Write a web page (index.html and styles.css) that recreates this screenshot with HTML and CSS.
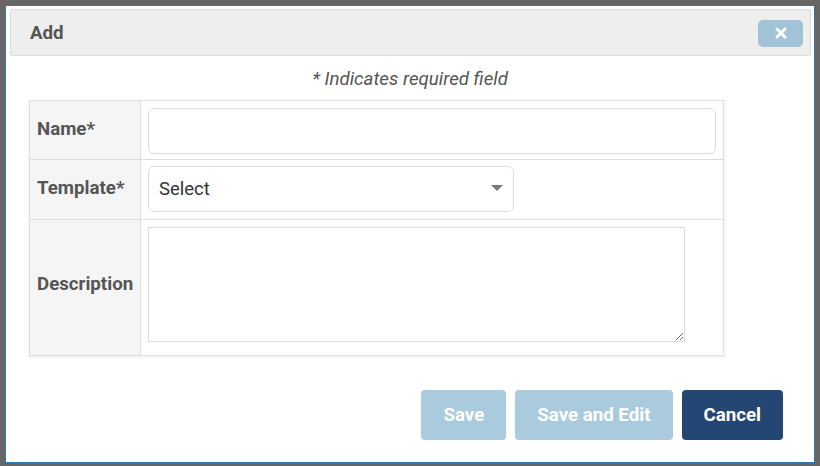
FILE: index.html
```html
<!DOCTYPE html>
<html lang="en">
<head>
    <meta charset="UTF-8">
    <title>Add</title>
    <link rel="stylesheet" href="styles.css">
</head>
<body>
    <div class="modal">
        <div class="modal-header">
            <h4 class="modal-title">Add</h4>
            <button class="close-button" type="button" aria-label="Close">
                <svg width="12" height="12" viewBox="0 0 12 12">
                    <path d="M2 2 L10 10 M10 2 L2 10" stroke="#fff" stroke-width="3" stroke-linecap="round"/>
                </svg>
            </button>
        </div>

        <div class="modal-body">
            <p class="required-note">* Indicates required field</p>

            <table class="form-table">
                <colgroup>
                    <col class="col-label">
                    <col>
                </colgroup>
                <tr class="row-name">
                    <th><label for="name">Name*</label></th>
                    <td><input id="name" type="text" class="field field-wide"></td>
                </tr>
                <tr class="row-template">
                    <th><label for="template">Template*</label></th>
                    <td>
                        <span class="select-wrap">
                            <select id="template" class="field field-select">
                                <option>Select</option>
                            </select>
                        </span>
                    </td>
                </tr>
                <tr class="row-description">
                    <th><label for="description">Description</label></th>
                    <td><textarea id="description" class="field field-area"></textarea></td>
                </tr>
            </table>
        </div>

        <div class="modal-footer">
            <button class="btn btn-light" type="button">Save</button>
            <button class="btn btn-light" type="button">Save and Edit</button>
            <button class="btn btn-dark" type="button">Cancel</button>
        </div>
    </div>
</body>
</html>
```

FILE: styles.css
```css
html, body {
    height: 100%;
}

body {
    margin: 0;
    padding: 5px;
    box-sizing: border-box;
    background-color: #666;
    font-family: Roboto, "Liberation Sans", Arial, sans-serif;
}

.modal {
    width: 810px;
    height: 458px;
    box-sizing: border-box;
    background-color: #fff;
    border: 1px solid #2c79b3;
    padding: 3px 3px 0 4px;
    display: flex;
    flex-direction: column;
}

.modal-header {
    height: 47px;
    box-sizing: border-box;
    background-color: #eee;
    border: 1px solid #ddd;
    border-radius: 2px;
    display: flex;
    align-items: center;
    justify-content: space-between;
    padding: 0 7px 0 19px;
}

.modal-title {
    margin: 0;
    font-size: 18.7px;
    font-weight: bold;
    color: #555;
}

.close-button {
    width: 45px;
    height: 27px;
    border: none;
    border-radius: 5px;
    background-color: #a2c3d7;
    display: flex;
    align-items: center;
    justify-content: center;
    padding: 0;
    margin-top: 1px;
}

.modal-body {
    padding: 0 0 0 19px;
}

.required-note {
    margin: 12px 0 10px 0;
    text-align: center;
    font-style: italic;
    font-size: 18.7px;
    line-height: 22px;
    color: #555;
    padding-right: 20px;
}

.form-table {
    width: 695px;
    table-layout: fixed;
    border-collapse: collapse;
    border: 1px solid #ddd;
    box-shadow: 0 1px 4px rgba(0, 0, 0, 0.08);
}

.col-label {
    width: 111px;
}

.form-table th {
    background-color: #f5f5f5;
    border: 1px solid #ddd;
    text-align: left;
    padding: 0 0 3px 7px;
    font-size: 18.7px;
    font-weight: bold;
    color: #555;
    white-space: nowrap;
}

.form-table td {
    border: 1px solid #ddd;
    padding: 7px 6px 0 7px;
    vertical-align: top;
}

.row-name th, .row-name td {
    height: 59px;
    box-sizing: border-box;
}

.row-template th, .row-template td {
    height: 60px;
    box-sizing: border-box;
}

.row-template td {
    padding-top: 6px;
}

.row-description th, .row-description td {
    height: 136px;
    box-sizing: border-box;
}

.row-description th {
    padding-bottom: 8px;
}

.field {
    box-sizing: border-box;
    font-family: Roboto, "Liberation Sans", Arial, sans-serif;
    font-size: 18.5px;
    color: #333;
    background-color: #fff;
    border: 1px solid #ddd;
    outline: none;
}

.field-wide {
    display: block;
    width: 568px;
    height: 46px;
    border-radius: 6px;
    padding: 0 10px;
}

.select-wrap {
    display: inline-block;
    position: relative;
}

.select-wrap::after {
    content: "";
    position: absolute;
    right: 11px;
    top: 19px;
    border-left: 6px solid transparent;
    border-right: 6px solid transparent;
    border-top: 6px solid #777;
}

.field-select {
    display: block;
    width: 366px;
    height: 46px;
    border-radius: 6px;
    padding: 0 10px;
    appearance: none;
    -webkit-appearance: none;
}

.field-area {
    display: block;
    width: 537px;
    height: 115px;
    margin-top: 0;
    resize: both;
}

.modal-footer {
    margin-top: auto;
    display: flex;
    justify-content: flex-end;
    gap: 9px;
    padding: 0 28px 22px 0;
}

.btn {
    height: 50px;
    border: none;
    border-radius: 4px;
    font-family: Roboto, "Liberation Sans", Arial, sans-serif;
    font-size: 18.7px;
    font-weight: bold;
    color: #fff;
    padding: 0 22px;
}

.btn-light {
    background-color: #a9cbdd;
}

.btn-dark {
    background-color: #234672;
}
```
